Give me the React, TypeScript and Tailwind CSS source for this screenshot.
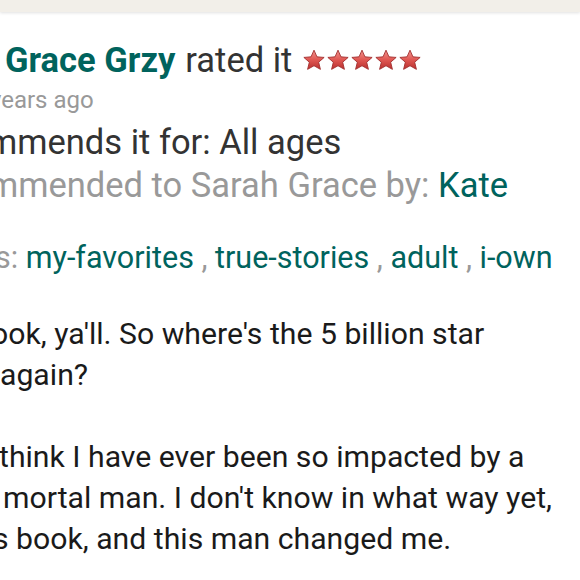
import React from "react";

function Star() {
  return (
    <svg width="24" height="22" viewBox="0 0 24 23">
      <defs>
        <linearGradient id="sg" x1="0" y1="0" x2="0" y2="1">
          <stop offset="0" stopColor="#f29590" />
          <stop offset="0.5" stopColor="#e05752" />
          <stop offset="1" stopColor="#b8302f" />
        </linearGradient>
      </defs>
      <path
        d="M12 1.2l3.1 7 7.5.6-5.7 5 1.8 7.5L12 17.5l-6.7 3.8 1.8-7.5-5.7-5 7.5-.6z"
        fill="url(#sg)"
        stroke="#9e2a2a"
        strokeWidth="0.9"
        strokeLinejoin="round"
      />
    </svg>
  );
}

export default function App() {
  return (
    <div className="w-[580px] h-[580px] overflow-hidden bg-white font-['Roboto',sans-serif]">
      <div className="h-[12px] bg-[#f2efe9] shadow-[0_1px_3px_rgba(0,0,0,0.12)]" />

      <div className="mt-[27px] flex items-center whitespace-nowrap text-[34.5px] leading-[42px] pl-[5px]">
        <span className="font-bold text-[#00635d]">Grace Grzy</span>
        <span className="ml-[10px] text-[#333333]">rated it</span>
        <span className="ml-[10px] flex items-center">
          <Star />
          <Star />
          <Star />
          <Star />
          <Star />
        </span>
      </div>

      <div className="mt-[4px] whitespace-nowrap text-[24px] leading-[30px] text-[#999999] -ml-[10px]">
        years ago
      </div>

      <div className="mt-[6px] whitespace-nowrap text-[34.5px] leading-[43px] text-[#333333] -ml-[13px]">
        mmends it for: All ages
      </div>
      <div className="whitespace-nowrap text-[34.5px] leading-[43px] text-[#999999] -ml-[12px]">
        mmended to Sarah Grace by: <span className="text-[#00635d]">Kate</span>
      </div>

      <div className="mt-[30px] whitespace-nowrap text-[30.5px] leading-[41px] text-[#999999] -ml-[5px]">
        s: <span className="text-[#00635d]">my-favorites</span> , <span className="text-[#00635d]">true-stories</span> , <span className="text-[#00635d]">adult</span> , <span className="text-[#00635d]">i-own</span>
      </div>

      <div className="mt-[35px] text-[30.2px] leading-[41px] text-[#1a1a1a] whitespace-nowrap">
        <div className="-ml-[9px]">ook, ya'll. So where's the 5 billion star</div>
        <div>again?</div>
        <div className="h-[41px]" />
        <div className="-ml-[1px]">think I have ever been so impacted by a</div>
        <div className="pl-[3px]">mortal man. I don't know in what way yet,</div>
        <div className="-ml-[7px]">s book, and this man changed me.</div>
      </div>
    </div>
  );
}
